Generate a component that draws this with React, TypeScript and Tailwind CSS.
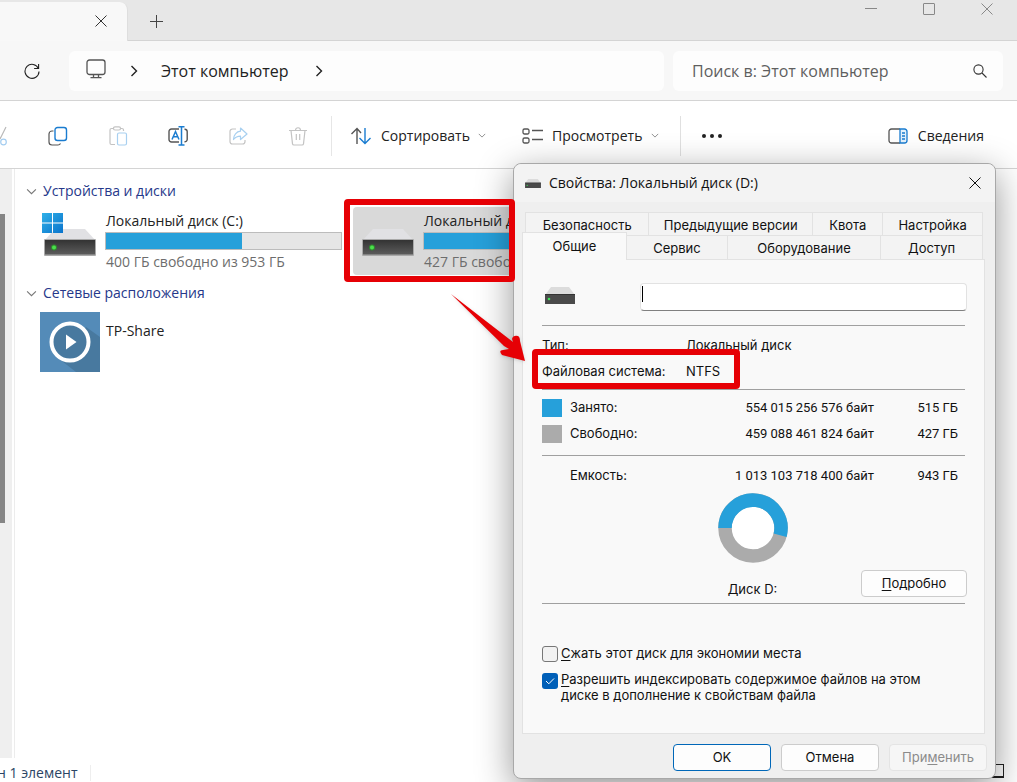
import type { ReactNode } from "react";

function DriveIcon({ className, windows = false }: { className: string; windows?: boolean }) {
  return (
    <svg viewBox="0 0 54 46" className={className} aria-hidden="true">
      <defs>
        <linearGradient id="driveBody" x1="0" y1="0" x2="0" y2="1">
          <stop offset="0" stopColor="#333" />
          <stop offset="1" stopColor="#5c5c5c" />
        </linearGradient>
        <linearGradient id="winLogo" x1="0" y1="0" x2="1" y2="1">
          <stop offset="0" stopColor="#2fb0e8" />
          <stop offset="1" stopColor="#0a74cc" />
        </linearGradient>
      </defs>
      <path d="M13 17h30l11 12H2z" fill="#e1e1e4" />
      <rect x="2" y="27" width="52" height="17" rx="1" fill="#a9a9a9" />
      <rect x="3" y="28" width="50" height="14.500" fill="url(#driveBody)" />
      <circle cx="12" cy="35.500" r="3" fill="#2f8a2f" />
      <circle cx="12" cy="35.500" r="2" fill="#4be04b" />
      {windows && <path d="M0 1h10v9.500H0zM11 1h10v9.500H11zM0 11.500h10V21H0zM11 11.500h10V21H11z" fill="url(#winLogo)" />}
    </svg>
  );
}

function SmallDriveIcon({ className }: { className: string }) {
  return (
    <svg viewBox="0 0 30 17" className={className} aria-hidden="true">
      <path d="M6 0h18l6 8H0z" fill="#dcdcdc" />
      <rect x="0" y="7" width="30" height="10" fill="#4a4a4a" />
      <rect x="0" y="7" width="30" height="1" fill="#333" />
      <circle cx="4" cy="12" r="1.300" fill="#3fe05a" />
    </svg>
  );
}

function Chevron({ className, d = "M1 1l4 4 4-4" }: { className: string; d?: string }) {
  return (
    <svg viewBox="0 0 10 6" fill="none" stroke="currentColor" className={className} aria-hidden="true">
      <path d={d} />
    </svg>
  );
}

function Crumb() {
  return (
    <svg viewBox="0 0 8 12" fill="none" stroke="#222" strokeWidth="1.400" className="h-3 w-2" aria-hidden="true">
      <path d="M1.500 1l5 5-5 5" />
    </svg>
  );
}

function Cross({ className }: { className: string }) {
  return (
    <svg viewBox="0 0 12 12" fill="none" stroke="currentColor" className={className} aria-hidden="true">
      <path d="M.5.5l11 11M11.500.5l-11 11" />
    </svg>
  );
}

function TitleBar() {
  return (
    <header className="flex h-[41px] shrink-0 items-stretch border-b border-[#d4d4d4] bg-[#e7e7e7]">
      <div className="-mb-px mt-[2px] flex w-32 items-center justify-end rounded-tr-lg border-r border-[#dedede] bg-[#f8f8f8] pb-[2px] pr-5">
        <button aria-label="Закрыть вкладку" className="text-[#333]">
          <Cross className="h-3 w-3" />
        </button>
      </div>
      <button aria-label="Новая вкладка" className="ml-[22px] mt-[3px] text-[#444]">
        <svg viewBox="0 0 13 13" stroke="currentColor" className="h-[13px] w-[13px]" aria-hidden="true">
          <path d="M6.500 0v13M0 6.500h13" />
        </svg>
      </button>
      <div className="ml-auto mr-6 flex h-[18px] items-center gap-[46px] text-[#888]">
        <button aria-label="Свернуть">
          <svg viewBox="0 0 12 12" stroke="currentColor" className="h-3 w-3">
            <path d="M0 5.500h12" />
          </svg>
        </button>
        <button aria-label="Развернуть">
          <svg viewBox="0 0 12 12" fill="none" stroke="currentColor" className="h-3 w-3">
            <rect x=".5" y=".5" width="11" height="11" rx=".5" />
          </svg>
        </button>
        <button aria-label="Закрыть">
          <Cross className="h-3 w-3" />
        </button>
      </div>
    </header>
  );
}

function AddressRow() {
  return (
    <nav className="flex h-[60px] shrink-0 items-center border-b border-[#d4d4d4] bg-[#f7f7f7] pr-[14px]">
      <button aria-label="Обновить" className="ml-6 mr-[29px]">
        <svg viewBox="0 0 16 16" fill="none" stroke="#222" strokeWidth="1.100" className="h-4 w-4">
          <path d="M14.400 5.500A7 7 0 1 0 15 8.500M14.600 1v4.500h-4.500" />
        </svg>
      </button>
      <div className="flex h-10 flex-1 items-center rounded-md bg-[#fdfdfd] pl-[17px]">
        <svg viewBox="0 0 20 20" fill="none" stroke="#555" strokeWidth="1.300" className="-mt-1 h-5 w-5" aria-hidden="true">
          <rect x="1" y="1" width="18" height="14.500" rx="2.500" />
          <path d="M7.500 15.500v3M12.500 15.500v3M4.500 18.700h11" />
        </svg>
        <span className="ml-6">
          <Crumb />
        </span>
        <a href="#computer" className="ml-[23px] mr-[27px] text-base text-[#222]">
          Этот компьютер
        </a>
        <Crumb />
      </div>
      <label className="ml-[9px] flex h-10 w-[330px] items-center rounded-md bg-[#fdfdfd] pl-[19px] pr-[16px]">
        <input
          type="search"
          aria-label="Поиск"
          placeholder="Поиск в: Этот компьютер"
          className="min-w-0 flex-1 bg-transparent text-base outline-none placeholder:text-[#5f5f5f]"
        />
        <svg viewBox="0 0 14 14" fill="none" stroke="#333" strokeWidth="1.100" className="h-[14px] w-[14px]" aria-hidden="true">
          <circle cx="5.500" cy="5.500" r="4.600" />
          <path d="M9 9l4.500 4.500" />
        </svg>
      </label>
    </nav>
  );
}

function Tool({ label, children }: { label: string; children: ReactNode }) {
  return (
    <button aria-label={label} className="flex h-6 w-5 items-center">
      <svg viewBox="0 0 20 20" fill="none" strokeWidth="1.200" className="h-5 w-5">
        {children}
      </svg>
    </button>
  );
}

function Toolbar() {
  return (
    <div className="flex h-[68px] shrink-0 items-center border-b border-[#d4d4d4] bg-white pt-[2px] text-sm text-[#222]">
      <div className="-ml-3 flex items-center gap-10">
        <Tool label="Вырезать">
          <path d="M18 1l-6 12M6 1l6 11" stroke="#b9b9b9" />
          <circle cx="15.500" cy="16" r="2.800" stroke="#a4cdf0" />
        </Tool>
        <Tool label="Копировать">
          <path d="M5.500 5H4a3 3 0 0 0-3 3v8a3 3 0 0 0 3 3h6a3 3 0 0 0 2.500-1.500" stroke="#555" />
          <rect x="7" y="1.500" width="11.500" height="13" rx="2.500" stroke="#1a7cd0" strokeWidth="1.400" />
        </Tool>
        <Tool label="Вставить">
          <path d="M7 18.500H3.500A1.500 1.500 0 0 1 2 17V4a1.500 1.500 0 0 1 1.500-1.500H5M12.500 2.500H14A1.500 1.500 0 0 1 15.500 4v1" stroke="#c3c3c3" />
          <rect x="5.500" y=".8" width="7" height="3.200" rx="1.500" stroke="#c3c3c3" />
          <rect x="9.500" y="7" width="9" height="12" rx="1.500" stroke="#a8d0f0" />
        </Tool>
        <Tool label="Переименовать">
          <path d="M11 3H3.500A2.500 2.500 0 0 0 1 5.500v8A2.500 2.500 0 0 0 3.500 16H11M16.500 3.300A2.500 2.500 0 0 1 19.200 5.500v8a2.500 2.500 0 0 1-2.700 2.300" stroke="#555" strokeWidth="1.400" />
          <path d="M4 13.500l3.500-8 3.500 8M5.300 10.700h4.400M13.500 1v18M10.500.8h6M10.500 19h6" stroke="#1a7cd0" strokeWidth="1.500" />
        </Tool>
        <Tool label="Поделиться">
          <path d="M8 3H4.500A2.500 2.500 0 0 0 2 5.500v10A2.500 2.500 0 0 0 4.500 18h10a2.500 2.500 0 0 0 2.500-2.500V14" stroke="#c3c3c3" />
          <path d="M12.500 2l6.500 6-6.500 5.500v-3.300c-3 0-5 .8-7 3.300 0-4.500 3-8 7-8.300z" stroke="#a8d0f0" strokeLinejoin="round" />
        </Tool>
        <Tool label="Удалить">
          <path d="M1 4.500h18M7.500 4.500C7.500 .8 12.500.8 12.500 4.500M3 4.500l1.500 13.300A1.500 1.500 0 0 0 6 19h8a1.500 1.500 0 0 0 1.500-1.200L17 4.500M8.300 8v6M11.700 8v6" stroke="#c3c3c3" />
        </Tool>
      </div>
      <span className="ml-[23px] h-10 w-px bg-[#e6e6e6]" />
      <button className="ml-[18px] flex items-center">
        <svg viewBox="0 0 22 18" fill="none" strokeWidth="1.400" className="h-[18px] w-[22px]" aria-hidden="true">
          <path d="M7 17V1.500M1.500 7L7 1.500 11 6" stroke="#555" />
          <path d="M15 1v15.500M9.500 11l5.500 5.500 5.500-5.500" stroke="#1a7cd0" />
        </svg>
        <span className="ml-[9px]">Сортировать</span>
        <Chevron className="ml-2 h-[5px] w-2 text-[#777]" />
      </button>
      <button className="ml-9 flex items-center">
        <svg viewBox="0 0 21 18" fill="none" stroke="#555" strokeWidth="1.300" className="h-[18px] w-[21px]" aria-hidden="true">
          <rect x="1" y="2" width="6" height="5" rx="1.500" />
          <rect x="1" y="11" width="6" height="5" rx="1.500" />
          <path d="M10 3.500h11M10 12.500h11" />
        </svg>
        <span className="ml-[9px]">Просмотреть</span>
        <Chevron className="ml-[9px] h-[5px] w-2 text-[#777]" />
      </button>
      <span className="ml-[21px] h-10 w-px bg-[#e0e0e0]" />
      <button aria-label="Дополнительно" className="ml-[21px]">
        <svg viewBox="0 0 20 4" fill="#222" className="h-1 w-5">
          <circle cx="2" cy="2" r="2" />
          <circle cx="10" cy="2" r="2" />
          <circle cx="18" cy="2" r="2" />
        </svg>
      </button>
      <button className="ml-auto mr-[33px] flex items-center">
        <svg viewBox="0 0 20 16" fill="none" strokeWidth="1.300" className="h-4 w-5" aria-hidden="true">
          <path d="M12 1H3.500A2.500 2.500 0 0 0 1 3.500v9A2.500 2.500 0 0 0 3.500 15H12" stroke="#555" />
          <path d="M12 1h4.500A2.500 2.500 0 0 1 19 3.500v9a2.500 2.500 0 0 1-2.500 2.500H12z" fill="#e3f1fc" stroke="#1a7cd0" />
          <path d="M14 5h3M14 8h3M14 11h3" stroke="#1a7cd0" />
        </svg>
        <span className="ml-[10px]">Сведения</span>
      </button>
    </div>
  );
}

function GroupTitle({ children }: { children: ReactNode }) {
  return (
    <h2 className="flex h-6 items-center text-sm text-[#26388a]">
      <Chevron className="mr-[6px] h-[7px] w-[11px] text-[#777]" />
      {children}
    </h2>
  );
}

function Files() {
  return (
    <main className="min-w-0 flex-1 overflow-hidden pl-[11px] pt-[10px] text-sm text-[#222]">
      <GroupTitle>Устройства и диски</GroupTitle>
      <ul className="mt-1 flex">
        <li className="flex h-[68px] w-[313px] shrink-0 items-start pl-4">
          <DriveIcon windows className="mt-[5px] h-[46px] w-[54px] shrink-0" />
          <div className="ml-[9px] w-[237px] shrink-0">
            <p className="mt-1 h-5 pl-px leading-5">Локальный диск (C:)</p>
            <div className="mt-[1px] h-[18px] border border-[#bcbcbc] bg-[#e6e6e6]">
              <div className="h-full w-[58%] bg-[#26a0da]" />
            </div>
            <p className="mt-[2px] pl-px leading-5 text-[#6d6d6d]">400 ГБ свободно из 953 ГБ</p>
          </div>
        </li>
        <li className="ml-[14px] flex h-[68px] w-[313px] shrink-0 items-start rounded-sm bg-[#d9d9d9] pl-[7px]">
          <DriveIcon className="mt-[5px] h-[46px] w-[54px] shrink-0" />
          <div className="ml-[9px] w-[237px] shrink-0">
            <p className="mt-1 h-5 pl-px leading-5">Локальный диск (D:)</p>
            <div className="mt-[1px] h-[18px] border border-[#bcbcbc] bg-[#e6e6e6]">
              <div className="h-full w-[54%] bg-[#26a0da]" />
            </div>
            <p className="mt-[2px] pl-px leading-5 text-[#6d6d6d]">427 ГБ свободно из 943 ГБ</p>
          </div>
        </li>
      </ul>
      <div className="mt-[6px]">
        <GroupTitle>Сетевые расположения</GroupTitle>
      </div>
      <div className="ml-[14px] mt-[7px] flex items-start">
        <svg viewBox="0 0 60 60" className="h-[60px] w-[60px]" aria-hidden="true">
          <path fill="#548bb8" d="M0 0h60v60H0z" />
          <path fill="#48799f" d="M46 15l14 10v35H36L18 46z" />
          <circle cx="30" cy="30" r="18.500" fill="#48799f" stroke="#fff" strokeWidth="4" />
          <path d="M26 22.500v15L36.500 30z" fill="#fff" />
        </svg>
        <p className="ml-[6px] mt-[9px] leading-5">TP-Share</p>
      </div>
    </main>
  );
}

const topTabs = [
  { name: "Безопасность", width: "flex-[124]" },
  { name: "Предыдущие версии", width: "flex-[165]" },
  { name: "Квота", width: "flex-[70]" },
  { name: "Настройка", width: "flex-[100]" },
];
const bottomTabs = [
  { name: "Сервис", width: "flex-[101]" },
  { name: "Оборудование", width: "flex-[154]" },
  { name: "Доступ", width: "flex-[102]" },
];

function Tabs() {
  return (
    <div role="tablist" className="pl-[11px] pr-3">
      <div className="flex h-[23px] border-l border-t border-[#e2e2e2]">
        {topTabs.map((t) => (
          <button role="tab" key={t.name} className={`${t.width} border-r border-[#e2e2e2] bg-[#f3f3f3] pt-[2px] whitespace-nowrap leading-5`}>
            {t.name}
          </button>
        ))}
      </div>
      <div className="flex h-6">
        <button role="tab" aria-selected="true" className="relative -ml-[3px] -mb-px -mt-[3px] w-[105px] border-x border-t border-[#e2e2e2] bg-[#f9f9f9] pb-[2px] leading-4">
          Общие
        </button>
        {bottomTabs.map((t) => (
          <button role="tab" key={t.name} className={`${t.width} border-r border-t border-[#e2e2e2] bg-[#f3f3f3] pt-px whitespace-nowrap leading-5`}>
            {t.name}
          </button>
        ))}
      </div>
    </div>
  );
}

function Rule() {
  return <hr className="border-[#a0a0a0]" />;
}

function GeneralPanel() {
  return (
    <section className="relative -z-10 ml-2 mr-[10px] h-[475px] border border-[#e2e2e2] bg-[#f9f9f9] px-[19px]">
      <div className="-mr-[2px] flex items-center justify-between pt-[23px]">
        <SmallDriveIcon className="mb-1 ml-[3px] h-[17px] w-[30px]" />
        <div className="relative">
          <input
            aria-label="Имя тома"
            className="block h-7 w-[327px] rounded-sm border border-[#e2e2e2] border-b-[#808080] bg-white px-1 outline-none"
          />
          <span className="pointer-events-none absolute left-[2px] top-[3px] h-4 w-px bg-black" />
        </div>
      </div>
      <div className="mt-[14px]">
        <Rule />
      </div>
      <table className="mt-[7px]">
        <tbody>
          <tr className="h-[26px]">
            <th className="w-36 p-0 text-left font-normal">Тип:</th>
            <td className="p-0">Локальный диск</td>
          </tr>
          <tr className="h-[26px]">
            <th className="w-36 p-0 text-left font-normal">Файловая система:</th>
            <td className="p-0">NTFS</td>
          </tr>
        </tbody>
      </table>
      <div className="mt-1">
        <Rule />
      </div>
      <table className="mt-[5px] w-full">
        <tbody>
          <tr className="h-[26px]">
            <td className="w-7 p-0">
              <span className="block h-[18px] w-5 bg-[#26a0da]" />
            </td>
            <th className="p-0 text-left font-normal">Занято:</th>
            <td className="p-0 text-right font-['Roboto',sans-serif]">554 015 256 576 байт</td>
            <td className="w-[91px] p-0 pr-[7px] text-right font-['Roboto',sans-serif]">515 ГБ</td>
          </tr>
          <tr className="h-[26px]">
            <td className="w-7 p-0">
              <span className="block h-[18px] w-5 bg-[#ababab]" />
            </td>
            <th className="p-0 text-left font-normal">Свободно:</th>
            <td className="p-0 text-right font-['Roboto',sans-serif]">459 088 461 824 байт</td>
            <td className="w-[91px] p-0 pr-[7px] text-right font-['Roboto',sans-serif]">427 ГБ</td>
          </tr>
        </tbody>
      </table>
      <div className="mt-2">
        <Rule />
      </div>
      <table className="mt-[7px] w-full">
        <tbody>
          <tr className="h-[26px]">
            <th className="p-0 pl-7 text-left font-normal">Емкость:</th>
            <td className="p-0 text-right font-['Roboto',sans-serif]">1 013 103 718 400 байт</td>
            <td className="w-[91px] p-0 pr-[7px] text-right font-['Roboto',sans-serif]">943 ГБ</td>
          </tr>
        </tbody>
      </table>
      <div className="mt-1 flex">
        <div className="flex flex-1 flex-col items-center pl-[102px]">
          <svg viewBox="0 0 70 70" className="h-[70px] w-[70px]" role="img" aria-label="Занято 55%">
            <circle cx="35" cy="35" r="22" fill="#fff" />
            <circle cx="35" cy="35" r="28" fill="none" stroke="#ababab" strokeWidth="13.500" />
            <path d="M7 35a28 28 0 1 1 55.100 7.200" fill="none" stroke="#26a0da" strokeWidth="13.500" />
          </svg>
          <p className="mt-4 leading-5">Диск D:</p>
        </div>
        <button className="-mr-[2px] mt-[77px] h-[27px] w-[106px] rounded border border-[#ccc] bg-[#fdfdfd]">
          <u className="underline-offset-2">П</u>одробно
        </button>
      </div>
      <div className="mt-1">
        <Rule />
      </div>
      <label className="mt-10 flex h-5 items-center">
        <input type="checkbox" className="m-0 h-4 w-4 appearance-none rounded-[3px] border border-[#777] bg-[#f2f2f2]" />
        <span className="ml-[3px]">
          <u className="underline-offset-2">С</u>жать этот диск для экономии места
        </span>
      </label>
      <label className="mt-[7px] flex items-start leading-4">
        <span className="relative mt-[2px] h-4 w-4 shrink-0">
          <input type="checkbox" defaultChecked className="m-0 block h-4 w-4 appearance-none rounded-[3px] bg-[#005fb8]" />
          <svg viewBox="0 0 16 16" fill="none" stroke="#fff" className="pointer-events-none absolute inset-0">
            <path d="M4 8l2.800 2.800L12 5.500" />
          </svg>
        </span>
        <span className="ml-[3px] max-w-[384px]">
          <u className="underline-offset-2">Р</u>азрешить индексировать содержимое файлов на этом диске в дополнение к свойствам файла
        </span>
      </label>
    </section>
  );
}

function PropertiesDialog() {
  return (
    <div
      role="dialog"
      aria-label="Свойства"
      className="absolute right-[21px] top-[163px] isolate w-[483px] rounded-lg border border-[#a8a8a8] bg-[#efefef] pb-[7px] font-['Inter',sans-serif] text-[13px] text-[#111] shadow-[0_10px_36px_rgba(0,0,0,0.42)]"
    >
      <div className="flex h-[38px] items-center rounded-t-lg bg-[#f3f3f3] pl-[11px] pr-[14px] font-['Open_Sans',sans-serif] text-sm">
        <SmallDriveIcon className="h-[9px] w-4" />
        <h1 className="ml-2">Свойства: Локальный диск (D:)</h1>
        <button aria-label="Закрыть" className="ml-auto">
          <Cross className="h-3 w-3" />
        </button>
      </div>
      <div className="mt-[10px]">
        <Tabs />
        <GeneralPanel />
      </div>
      <div className="mt-[10px] flex justify-end gap-[10px] pr-2">
        <button className="h-[27px] w-[98px] rounded border border-[#0067b8] bg-[#fdfdfd]">OK</button>
        <button className="h-[27px] w-[98px] rounded border border-[#ccc] bg-[#fdfdfd]">Отмена</button>
        <button disabled className="h-[27px] w-[98px] rounded border border-[#e4e4e4] bg-[#f6f6f6] text-[#8b8b8b]">
          При<u className="underline-offset-2">м</u>енить
        </button>
      </div>
    </div>
  );
}

function Highlights() {
  return (
    <div className="pointer-events-none" aria-hidden="true">
      <div className="absolute left-[344px] top-[199px] h-[83px] w-[171px] rounded-sm border-[6px] border-[#e60005]" />
      <div className="absolute right-[277px] top-[349px] h-[40px] w-[208px] rounded-sm border-[6px] border-[#e60005]" />
      <svg viewBox="0 0 80 74" className="absolute left-[448px] top-[291px] h-[74px] w-20 drop-shadow">
        <path d="M3 3L65 51 64 48Q65 44 70 45Q72 46 72 50L77 70 54 64Q50 59 55 59L61 58 56 55z" fill="#e60005" />
      </svg>
    </div>
  );
}

export default function App() {
  return (
    <div className="relative flex h-screen flex-col overflow-hidden bg-white font-['Open_Sans',sans-serif]">
      <TitleBar />
      <AddressRow />
      <Toolbar />
      <div className="flex min-h-0 flex-1">
        <aside className="w-3 shrink-0 bg-[#efefef]">
          <div className="mt-[45px] h-[309px] w-[5px] bg-[#858585]" />
        </aside>
        <span className="ml-[2px] w-px bg-[#ececec]" />
        <Files />
      </div>
      <footer className="flex h-6 shrink-0 items-center overflow-hidden whitespace-nowrap pt-[5px] text-sm text-[#2b4565]">
        <span className="-ml-[3px]">н 1 элемент</span>
        <span className="ml-3 h-4 w-px bg-[#eee]" />
        <div className="mb-[3px] ml-auto mr-[9px] flex h-4 w-6 items-center justify-center">
          <span className="h-[14px] w-4 border border-b-2 border-[#222]" />
        </div>
      </footer>
      <PropertiesDialog />
      <Highlights />
    </div>
  );
}
